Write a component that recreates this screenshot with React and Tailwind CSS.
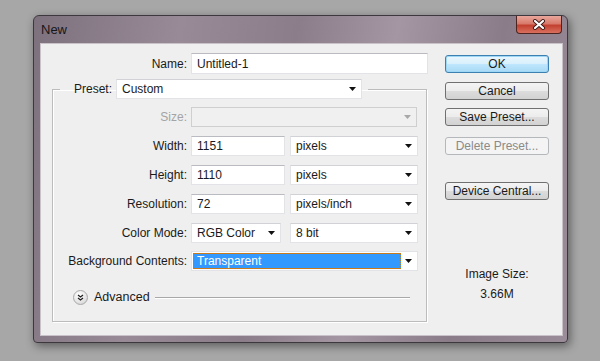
import React from 'react'

const Caret = ({ disabled }) => (
  <svg width="7" height="4" viewBox="0 0 7 4" className="shrink-0">
    <path d="M0 0h7L3.5 4z" fill={disabled ? '#a8a8a8' : '#111'} />
  </svg>
)

const TextBox = ({ value, w, h = 'h-[20px]' }) => (
  <div className={`${w} ${h} bg-white border border-[#e2e3e6] border-t-[#b9bbc0] flex items-center pl-[5px] text-[#1a1a1a]`}>
    {value}
  </div>
)

const Combo = ({ value, w, disabled, h = 'h-[20px]' }) => (
  <div
    className={`${w} ${h} border flex items-center justify-between pl-[5px] pr-[5px] ${
      disabled ? 'bg-[#f0f0f0] border-[#cfcfcf]' : 'bg-white border-[#e2e3e6] border-t-[#d0d2d6]'
    }`}
  >
    <span className="text-[#1a1a1a]">{value}</span>
    <Caret disabled={disabled} />
  </div>
)

const Row = ({ label, muted, children }) => (
  <div className="flex items-center gap-[4px]">
    <span className={`w-[127px] text-right ${muted ? 'text-[#a4a4a4]' : 'text-[#1a1a1a]'}`}>{label}</span>
    {children}
  </div>
)

const Button = ({ children, primary, disabled, className = '' }) => {
  let look =
    'border-[#707070] bg-[linear-gradient(#f4f4f4,#ececec_48%,#dcdcdc_52%,#d2d2d2)] text-[#1a1a1a]'
  if (primary)
    look =
      'border-[#3c7fb1] bg-[linear-gradient(#eaf6fd,#d9f0fc_48%,#bee6fd_52%,#a7d9f5)] text-[#1a1a1a] shadow-[inset_0_0_0_1px_#9ed6f5]'
  if (disabled) look = 'border-[#b5b8bb] bg-[#f4f4f4] text-[#8a8a8a]'
  return (
    <div
      className={`w-[104px] h-[18px] border rounded-[3px] flex items-center justify-center ${look} ${className}`}
    >
      {children}
    </div>
  )
}

export default function App() {
  return (
    <div className="w-[600px] h-[361px] overflow-hidden bg-[#a7a7a7] pt-[15px] pl-[33px] font-['Liberation_Sans',Arial,sans-serif] text-[12px] leading-none">
      {/* dialog window */}
      <div className="w-[535px] h-[328px] flex flex-col rounded-t-[6px] rounded-b-[4px] border border-[#3d373e] bg-[linear-gradient(100deg,#7e717e,#988a97_25%,#8b7d8a_45%,#a596a3_62%,#8a7c89_80%,#9a8c99)] shadow-[2px_3px_10px_rgba(0,0,0,0.45)]">
        {/* title bar */}
        <div className="h-[27px] flex items-start shrink-0">
          <span className="pl-[7px] pt-[7px] text-[13px] text-[#161616]">New</span>
          <div className="ml-auto mr-[5px] w-[46px] h-[18px] rounded-b-[4px] border border-t-0 border-[#4d2420] bg-[linear-gradient(#eaa79c,#d87a6b_45%,#c2402f_55%,#d9705f)] flex items-center justify-center">
            <svg width="14" height="11" viewBox="0 0 14 11">
              <path d="M3 2l8 7M11 2l-8 7" stroke="#3b1a16" strokeWidth="4" strokeLinecap="round" />
              <path d="M3 2l8 7M11 2l-8 7" stroke="#fff" strokeWidth="2.2" strokeLinecap="round" />
            </svg>
          </div>
        </div>

        {/* client area */}
        <div className="ml-[6px] mr-[4px] mb-[6px] flex-1 bg-[#efefef] border border-[#c9c2c9] flex">
          {/* left side */}
          <div className="w-[388px] pl-[11px] pt-[9px]">
            <div className="flex items-center gap-[4px]">
              <span className="w-[135px] text-right text-[#1a1a1a]">Name:</span>
              <TextBox value="Untitled-1" w="w-[237px]" h="h-[21px]" />
            </div>

            <fieldset className="mt-[5px] w-[375px] h-[243px] border border-[#bcbcbc] shadow-[inset_1px_1px_0_#fff,1px_1px_0_#fff] pl-[7px] pr-[8px] pt-[8px]">
              <legend className="pl-[14px] pr-[6px] flex items-center gap-[4px]">
                <span className="text-[#1a1a1a]">Preset:</span>
                <Combo value="Custom" w="w-[246px]" />
              </legend>

              <div className="flex flex-col gap-[9px]">
                <Row label="Size:" muted>
                  <Combo value="" w="w-[226px]" disabled />
                </Row>
                <Row label="Width:">
                  <TextBox value="1151" w="w-[94px]" />
                  <div className="ml-[1px]">
                    <Combo value="pixels" w="w-[128px]" />
                  </div>
                </Row>
                <Row label="Height:">
                  <TextBox value="1110" w="w-[94px]" />
                  <div className="ml-[1px]">
                    <Combo value="pixels" w="w-[128px]" />
                  </div>
                </Row>
                <Row label="Resolution:">
                  <TextBox value="72" w="w-[94px]" />
                  <div className="ml-[1px]">
                    <Combo value="pixels/inch" w="w-[128px]" />
                  </div>
                </Row>
                <Row label="Color Mode:">
                  <Combo value="RGB Color" w="w-[90px]" />
                  <div className="ml-[5px]">
                    <Combo value="8 bit" w="w-[128px]" />
                  </div>
                </Row>
                <div className="flex items-center gap-[4px] -mt-[1px]">
                  <span className="w-[127px] text-right text-[#1a1a1a]">Background Contents:</span>
                  <div className="w-[227px] h-[20px] bg-white border border-[#e2e3e6] flex items-center pl-[1px] pr-[5px] gap-[4px]">
                    <div className="flex-1 h-[16px] bg-[#3399ff] border border-dotted border-[#c77b1d] flex items-center pl-[3px] text-white">
                      Transparent
                    </div>
                    <Caret />
                  </div>
                </div>
              </div>

              <div className="mt-[19px] pl-[13px] flex items-center">
                <div className="w-[15px] h-[15px] rounded-full border border-[#a9a9a9] bg-[radial-gradient(circle_at_40%_30%,#ffffff,#e4e4e4_60%,#c8c8c8)] flex items-center justify-center">
                  <svg width="7" height="7" viewBox="0 0 7 7">
                    <path d="M1 1l2.5 2 2.5-2M1 4l2.5 2 2.5-2" stroke="#222" strokeWidth="1.3" fill="none" />
                  </svg>
                </div>
                <span className="ml-[6px] text-[#1a1a1a] text-[12.5px]">Advanced</span>
                <div className="ml-[5px] mr-[8px] flex-1 h-[2px] border-t border-[#a8a8a8] border-b border-b-white" />
              </div>
            </fieldset>
          </div>

          {/* right side buttons */}
          <div className="ml-[16px] w-[104px] pt-[11px] flex flex-col">
            <Button primary>OK</Button>
            <Button className="mt-[9px]">Cancel</Button>
            <Button className="mt-[8px]">Save Preset...</Button>
            <Button disabled className="mt-[11px]">Delete Preset...</Button>
            <Button className="mt-[27px]">Device Central...</Button>
            <div className="mt-[68px] text-center text-[#1a1a1a]">Image Size:</div>
            <div className="mt-[8px] text-center text-[#1a1a1a]">3.66M</div>
          </div>
        </div>
      </div>
    </div>
  )
}
